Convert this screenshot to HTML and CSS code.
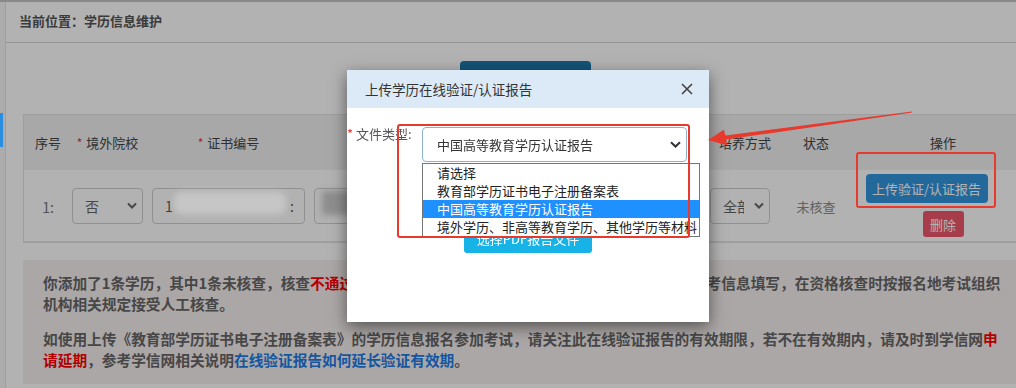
FILE: index.html
```html
<!DOCTYPE html>
<html lang="zh-CN">
<head>
<meta charset="utf-8">
<title>学历信息维护</title>
<link rel="stylesheet" href="styles.css">
</head>
<body>
<div class="page">
  <div class="layout">
    <div class="sidebar"></div>
    <div class="content">
      <div class="crumb">当前位置：学历信息维护</div>
      <div class="toolbar"><button class="btn-dark" aria-label="添加学历"></button></div>
      <div class="panel">
        <div class="grid thead">
          <div class="th">序号</div>
          <div class="th pr"><span class="star">*</span>境外院校</div>
          <div class="th pr"><span class="star">*</span>证书编号</div>
          <div class="th"></div>
          <div class="th">培养方式</div>
          <div class="th">状态</div>
          <div class="th">操作</div>
        </div>
        <div class="grid trow">
          <div class="td num">1:</div>
          <div class="td">
            <div class="sel sel-yn"><span>否</span><svg class="chev" width="10" height="7" viewBox="0 0 10 7"><path d="M1 1.5 L5 5.5 L9 1.5"/></svg></div>
          </div>
          <div class="td">
            <div class="inp inp-cert"><span>1</span><span class="fill"></span><span>:</span></div>
          </div>
          <div class="td">
            <div class="inp inp-other"></div>
          </div>
          <div class="td">
            <div class="sel sel-mode"><span class="clip">全部</span><svg class="chev" width="10" height="7" viewBox="0 0 10 7"><path d="M1 1.5 L5 5.5 L9 1.5"/></svg></div>
          </div>
          <div class="td status">未核查</div>
          <div class="td ops">
            <button class="btn-upload">上传验证/认证报告</button>
            <button class="btn-del">删除</button>
          </div>
        </div>
      </div>
      <div class="notice">
        <p>你添加了1条学历，其中1条未核查，核查<span class="red">不通过</span>的学历，请上传在线验证报告或认证报告，或按相关参考信息填写，在资格核查时按报名地考试组织<br>机构相关规定接受人工核查。</p>
        <p>如使用上传《教育部学历证书电子注册备案表》的学历信息报名参加考试，请关注此在线验证报告的有效期限，若不在有效期内，请及时到学信网<span class="red">申<br>请延期</span>，参考学信网相关说明<span class="link">在线验证报告如何延长验证有效期</span>。</p>
      </div>
    </div>
  </div>
</div>

<div class="mask"></div>
<div class="side-mark"></div>
<div class="blob blob-a"></div>
<div class="blob blob-b"></div>

<div class="modal">
  <div class="modal-head">
    <span>上传学历在线验证/认证报告</span>
    <svg class="close" width="12" height="12" viewBox="0 0 12 12"><path d="M1 1 L11 11 M11 1 L1 11"/></svg>
  </div>
  <div class="modal-body">
    <div class="field">
      <label><span class="mstar">*</span> 文件类型:</label>
      <div class="mselect"><span>中国高等教育学历认证报告</span><svg class="mchev" width="11" height="7" viewBox="0 0 11 7"><path d="M1 1.2 L5.5 5.5 L10 1.2"/></svg></div>
    </div>
    <button class="btn-file">选择PDF报告文件</button>
  </div>
</div>

<div class="dropdown">
  <div class="opt">请选择</div>
  <div class="opt">教育部学历证书电子注册备案表</div>
  <div class="opt on">中国高等教育学历认证报告</div>
  <div class="opt">境外学历、非高等教育学历、其他学历等材料</div>
</div>

<div class="mark mark-a"></div>
<div class="mark mark-b"></div>
<svg class="arrow" width="1016" height="388" viewBox="0 0 1016 388">
  <polygon points="708,140 727.5,145.5 726.1,139.6 912.1,112.6 911.9,111.4 725.5,135.4 723.8,129.8"/>
</svg>
</body>
</html>
```

FILE: styles.css
```css
* { box-sizing: border-box; }

body {
  margin: 0;
  width: 1016px;
  height: 388px;
  overflow: hidden;
  font-family: "Noto Sans CJK SC", "Noto Sans", sans-serif;
  background: #fff;
}

button {
  font-family: inherit;
  border: none;
  padding: 0;
  cursor: pointer;
}

.page {
  height: 388px;
  border-top: 2px solid #c4c4c4;
}

.layout {
  display: flex;
  height: 100%;
}

.sidebar {
  flex: none;
  width: 6px;
  background: #f7f7f7;
  border-right: 1px solid #e4e4e4;
}

.content {
  flex: 1;
  min-width: 0;
  overflow: hidden;
}

.crumb {
  height: 41px;
  border-bottom: 1px solid #d4d4d4;
  padding: 0 0 3px 13px;
  display: flex;
  align-items: center;
  font-size: 13px;
  font-weight: 700;
  color: #555;
}

.toolbar {
  height: 71px;
  padding: 18px 0 0 454px;
}

.btn-dark {
  width: 131px;
  height: 34px;
  background: #1d78ae;
  border-radius: 4px;
}

.panel {
  margin-left: 17px;
  border: 1px solid #e2e2e2;
  border-right: none;
  overflow: hidden;
}

.grid {
  display: grid;
  grid-template-columns: 48px 80px 162px 396px 70px 72px 182px;
  align-items: center;
}

.thead {
  height: 55px;
  background: #f1f1f1;
  font-size: 13px;
  color: #444;
}

.th {
  text-align: center;
  white-space: nowrap;
}

.th.pr { padding-right: 9px; }

.star {
  color: #e53935;
  margin-right: 4px;
  font-size: 12px;
}

.trow {
  height: 72px;
  border-bottom: 1px solid #e6e6e6;
}

.td { display: flex; }

.num {
  justify-content: center;
  font-size: 14px;
  color: #777;
  padding-top: 3px;
}

.sel {
  height: 36px;
  border: 1px solid #cfcfcf;
  border-radius: 4px;
  background: #fff;
  display: flex;
  align-items: center;
  justify-content: space-between;
  font-size: 14px;
  color: #666;
}

.sel-yn {
  width: 71px;
  padding: 0 5px 0 12px;
}

.sel-mode {
  width: 60px;
  padding: 0 5px 0 12px;
}

.clip {
  width: 21px;
  overflow: hidden;
  white-space: nowrap;
}

.chev path {
  fill: none;
  stroke: #666;
  stroke-width: 2;
}

.inp {
  height: 36px;
  border: 1px solid #cfcfcf;
  border-radius: 4px;
  background: #fff;
  display: flex;
  align-items: center;
  font-size: 14px;
  color: #555;
}

.inp-cert {
  width: 153px;
  padding: 0 10px 0 12px;
}

.inp-cert .fill { flex: 1; }

.inp-other { width: 150px; }

.status {
  justify-content: center;
  font-size: 13px;
  color: #8c8c8c;
  padding-top: 2px;
}

.ops {
  flex-direction: column;
  align-items: center;
  gap: 8px;
}

.btn-upload {
  width: 122px;
  height: 29px;
  margin-right: 33px;
  background: #3296dd;
  color: #fff;
  border-radius: 4px;
  font-size: 13px;
}

.btn-del {
  width: 41px;
  height: 26px;
  background: #f0586a;
  color: #fff;
  border-radius: 3px;
  font-size: 13px;
}

.notice {
  margin: 17px 0 0 17px;
  background: #f6f0f0;
  padding: 12px 0 14px 20px;
  font-size: 14.7px;
  font-weight: 700;
  line-height: 21px;
  color: #666;
  white-space: nowrap;
}

.notice p { margin: 0; }
.notice p + p { margin-top: 14px; }

.red { color: #ff0000; }
.link { color: #1e7ce6; }

/* overlay layer */
.mask {
  position: fixed;
  inset: 0;
  background: rgba(0, 0, 0, 0.3);
}

.side-mark {
  position: absolute;
  left: 0;
  top: 113px;
  width: 3px;
  height: 34px;
  background: #2a8de0;
}

.blob {
  position: absolute;
  filter: blur(3px);
}

.blob-a {
  left: 174px;
  top: 192px;
  width: 112px;
  height: 22px;
  background: #c6c6c6;
  border-radius: 8px;
}

.blob-b {
  left: 322px;
  top: 191px;
  width: 30px;
  height: 24px;
  background: #8e8e8e;
}

/* modal */
.modal {
  position: absolute;
  left: 347px;
  top: 70px;
  width: 362px;
  height: 252px;
  background: #fff;
  box-shadow: 0 5px 15px rgba(0, 0, 0, 0.5);
}

.modal-head {
  height: 38px;
  background: #dce9f6;
  display: flex;
  align-items: center;
  justify-content: space-between;
  padding: 0 16px 0 18px;
  font-size: 13.5px;
  color: #333;
}

.close path {
  stroke: #444;
  stroke-width: 1.6;
  fill: none;
}

.modal-body { padding-top: 19px; }

.field {
  display: flex;
  align-items: flex-start;
}

.field label {
  width: 61px;
  flex: none;
  text-align: right;
  white-space: nowrap;
  font-size: 13px;
  line-height: 20px;
  margin-top: -3px;
  color: #555;
}

.mstar { color: #e53935; }

.mselect {
  margin-left: 14px;
  width: 265px;
  height: 35px;
  border: 1px solid #8fb0d6;
  border-radius: 4px;
  display: flex;
  align-items: center;
  justify-content: space-between;
  padding: 0 5px 0 14px;
  font-size: 13px;
  color: #333;
}

.mchev path {
  fill: none;
  stroke: #333;
  stroke-width: 2;
}

.btn-file {
  display: block;
  margin: 61px auto 0;
  width: 128px;
  height: 30px;
  background: #17b3e6;
  color: #fff;
  border-radius: 3px;
  font-size: 13px;
}

.dropdown {
  position: absolute;
  left: 422px;
  top: 163px;
  width: 278px;
  border: 1px solid #767676;
  background: #fff;
  font-size: 13px;
  color: #222;
}

.opt {
  height: 18px;
  line-height: 18px;
  padding-left: 14px;
  white-space: nowrap;
}

.opt.on {
  background: #1e90ff;
  color: #fff;
}

/* annotations */
.mark {
  position: absolute;
  border: 2.5px solid #e8392d;
  border-radius: 3px;
}

.mark-a {
  left: 397px;
  top: 124px;
  width: 293px;
  height: 114px;
}

.mark-b {
  left: 856px;
  top: 152px;
  width: 140px;
  height: 56px;
}

.arrow {
  position: absolute;
  left: 0;
  top: 0;
  pointer-events: none;
}

.arrow polygon { fill: #e8392d; }
```
